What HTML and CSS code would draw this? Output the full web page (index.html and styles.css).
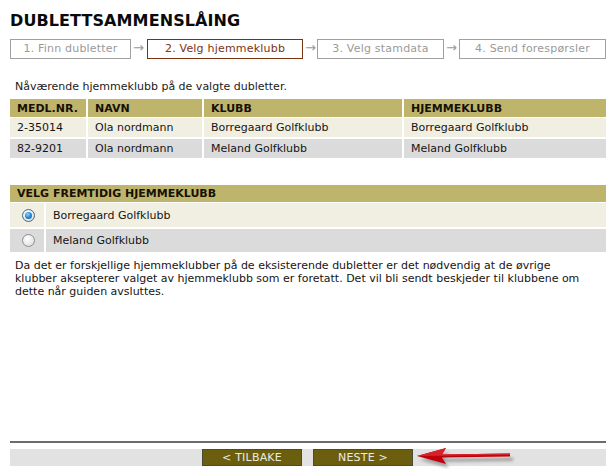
FILE: index.html
```html
<!DOCTYPE html>
<html lang="no">
<head>
<meta charset="utf-8">
<title>Dublettsammenslåing</title>
<link rel="stylesheet" href="styles.css">
</head>
<body>
<div class="page">
  <h1 class="title">DUBLETTSAMMENSLÅING</h1>
  <div class="steps">
    <div class="step">1. Finn dubletter</div>
    <div class="arrow">→</div>
    <div class="step active">2. Velg hjemmeklubb</div>
    <div class="arrow">→</div>
    <div class="step">3. Velg stamdata</div>
    <div class="arrow">→</div>
    <div class="step">4. Send forespørsler</div>
  </div>

  <p class="intro">Nåværende hjemmeklubb på de valgte dubletter.</p>
  <table class="grid">
    <thead>
      <tr><th class="c1">MEDL.NR.</th><th class="c2">NAVN</th><th class="c3">KLUBB</th><th class="c4">HJEMMEKLUBB</th></tr>
    </thead>
    <tbody>
      <tr class="odd"><td>2-35014</td><td>Ola nordmann</td><td>Borregaard Golfklubb</td><td>Borregaard Golfklubb</td></tr>
      <tr class="even"><td>82-9201</td><td>Ola nordmann</td><td>Meland Golfklubb</td><td>Meland Golfklubb</td></tr>
    </tbody>
  </table>

  <table class="choice">
    <thead>
      <tr><th colspan="2">VELG FREMTIDIG HJEMMEKLUBB</th></tr>
    </thead>
    <tbody>
      <tr class="odd"><td class="rc"><span class="radio checked"></span></td><td>Borregaard Golfklubb</td></tr>
      <tr class="even"><td class="rc"><span class="radio"></span></td><td>Meland Golfklubb</td></tr>
    </tbody>
  </table>

  <p class="note">Da det er forskjellige hjemmeklubber på de eksisterende dubletter er det nødvendig at de øvrige klubber aksepterer valget av hjemmeklubb som er foretatt. Det vil bli sendt beskjeder til klubbene om dette når guiden avsluttes.</p>

  <div class="footer">
    <div class="bar">
      <button class="btn">&lt; TILBAKE</button>
      <button class="btn">NESTE &gt;</button>
      <svg class="pointer" width="110" height="24" viewBox="0 0 110 24">
        <defs>
          <filter id="sh" x="-20%" y="-50%" width="140%" height="200%">
            <feGaussianBlur stdDeviation="1.5"/>
          </filter>
        </defs>
        <g fill="#7a7a7a" opacity="0.6" filter="url(#sh)" transform="translate(3,4)">
          <path d="M3 11 L32 3 L28 9.5 L96 8.5 L96 12 L28 13 L32 19 Z"/>
        </g>
        <path d="M3 11 L32 3 L28 9.5 L96 8.5 L96 11.5 L28 12.5 L32 19 Z" fill="#c0000a"/>
        <path d="M3 11 L32 3 L28 9.5 L96 8.5 L96 10 L28 10.8 Z" fill="#d8222a"/>
      </svg>
    </div>
  </div>
</div>
</body>
</html>
```

FILE: styles.css
```css
html, body {
  margin: 0;
  padding: 0;
  background: #fff;
}

body {
  font-family: "DejaVu Sans", Verdana, sans-serif;
  font-size: 11px;
  color: #111;
}

.page {
  height: 475px;
  box-sizing: border-box;
  padding: 0 8px 9px 10px;
  display: flex;
  flex-direction: column;
}

.title {
  margin: 12px 0 0 0;
  font-size: 16px;
  line-height: 18px;
  font-weight: bold;
  color: #0a0a0a;
  letter-spacing: 0.1px;
}

.steps {
  margin-top: 9px;
  display: grid;
  grid-template-columns: 121px 16px 156px 14px 127px 15px 147px;
  height: 20px;
}

.step {
  border: 1px solid #a0a0a0;
  color: #9a9a9a;
  text-align: center;
  line-height: 18px;
  font-size: 11px;
  letter-spacing: 0.2px;
}

.step.active {
  border-color: #7a3412;
  color: #7a3412;
}

.arrow {
  color: #9a9a9a;
  font-size: 13px;
  line-height: 17px;
  padding-left: 2px;
}

.intro {
  margin: 21px 0 0 5px;
  line-height: 13px;
  font-size: 11px;
  color: #1a1a1a;
}

table {
  border-collapse: collapse;
  width: 100%;
  font-size: 11px;
}

.grid {
  margin-top: 6px;
}

th {
  background: #bfb46c;
  text-align: left;
  font-weight: bold;
  color: #161006;
  padding: 0 7px;
}

td {
  padding: 0 7px;
  color: #151515;
}

.grid th, .grid td {
  border-left: 2px solid #fff;
}

.grid th:first-child, .grid td:first-child {
  border-left: none;
}

.grid th {
  height: 18px;
}

.grid td {
  height: 19px;
  border-top: 1px solid #fff;
}

.grid .even td {
  border-top-width: 2px;
}

.grid .c1 { width: 62px; }
.grid .c2 { width: 100px; }
.grid .c3 { width: 184px; }

.odd td { background: #f1efe1; }
.even td { background: #dbdbdb; }

.choice {
  margin-top: 27px;
}

.choice th {
  height: 17px;
  padding: 0 7px;
}

.choice td {
  height: 24px;
  border-top: 1px solid #fff;
}

.choice .even td {
  height: 23px;
  border-top-width: 2px;
}

.choice td.rc {
  width: 22px;
  padding: 0 0 0 12px;
  border-right: 2px solid #fff;
}

.radio {
  display: block;
  width: 11px;
  height: 11px;
  border-radius: 50%;
  border: 1px solid #8e8f8f;
  background: radial-gradient(circle at 40% 35%, #ffffff 0%, #eaeaea 55%, #cfcfcf 100%);
  position: relative;
}

.radio.checked {
  border-color: #3c6a96;
}

.radio.checked::after {
  content: "";
  position: absolute;
  left: 2px;
  top: 2px;
  width: 7px;
  height: 7px;
  border-radius: 50%;
  background: radial-gradient(circle at 40% 35%, #8fd3ff 0%, #2a86d2 50%, #0d4f8e 100%);
}

.note {
  margin: 7px 16px 0 5px;
  line-height: 13px;
  font-size: 11px;
  color: #151515;
}

.footer {
  margin-top: auto;
  border-top: 2px solid #6c6c6c;
  padding-top: 6px;
}

.bar {
  position: relative;
  background: #e2e2e2;
  height: 17px;
  display: flex;
  gap: 11px;
  padding-left: 192px;
}

.btn {
  width: 100px;
  height: 17px;
  box-sizing: border-box;
  margin: 0;
  padding: 0;
  border: 1px solid #4a4a3a;
  background: #6b5e0f;
  color: #ecebe2;
  font-family: "DejaVu Sans", Verdana, sans-serif;
  font-size: 11px;
  line-height: 15px;
  letter-spacing: 0.2px;
}

.pointer {
  position: absolute;
  left: 404px;
  top: -4px;
}
```
